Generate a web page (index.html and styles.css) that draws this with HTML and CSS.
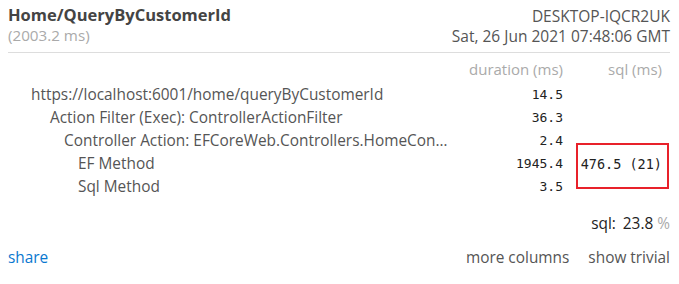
FILE: index.html
```html
<!DOCTYPE html>
<html>
<head>
<meta charset="utf-8">
<link rel="stylesheet" href="styles.css">
</head>
<body>
<div class="panel">
  <div class="head">
    <div class="head-left">
      <div class="title">Home/QueryByCustomerId</div>
      <div class="total">(2003.2 ms)</div>
    </div>
    <div class="head-right">
      <div class="machine">DESKTOP-IQCR2UK</div>
      <div class="date">Sat, 26 Jun 2021 07:48:06 GMT</div>
    </div>
  </div>
  <div class="timings">
    <div class="th"></div>
    <div class="th num">duration (ms)</div>
    <div class="th sqlcol">sql (ms)</div>

    <div class="label l0">https://localhost:6001/home/queryByCustomerId</div>
    <div class="num">14.5</div>
    <div class="sqlcol"></div>

    <div class="label l1">Action Filter (Exec): ControllerActionFilter</div>
    <div class="num">36.3</div>
    <div class="sqlcol"></div>

    <div class="label l2">Controller Action: EFCoreWeb.Controllers.HomeController.QueryByCustomerId</div>
    <div class="num">2.4</div>
    <div class="sqlcol"></div>

    <div class="label l3">EF Method</div>
    <div class="num">1945.4</div>
    <div class="sqlcol mark"><span class="sqlval">476.5 (21)</span></div>

    <div class="label l3">Sql Method</div>
    <div class="num">3.5</div>
    <div class="sqlcol"></div>
  </div>
  <div class="summary">sql: <span class="pct-val">23.8</span> <span class="pct">%</span></div>
  <div class="foot">
    <a class="share">share</a>
    <div class="links">
      <a class="link">more columns</a>
      <a class="link">show trivial</a>
    </div>
  </div>
</div>
</body>
</html>
```
FILE: styles.css
```css
html, body {
  margin: 0;
  padding: 0;
  background: #fff;
}
body {
  font-family: "Open Sans", "Noto Sans", sans-serif;
  color: #555;
  font-size: 15.4px;
}
.panel {
  width: 679px;
  box-sizing: border-box;
  padding: 0 9px 0 8px;
  height: 272px;
  box-shadow: 0 2px 6px rgba(0,0,0,0.18);
  background: #fff;
}
.head {
  display: flex;
  justify-content: space-between;
  border-bottom: 1px solid #ddd;
  height: 53px;
  box-sizing: border-box;
  padding-top: 5px;
}
.title {
  font-weight: 700;
  font-size: 16.5px;
  line-height: 20px;
  color: #444;
}
.total {
  color: #aaa;
  font-size: 15.2px;
  line-height: 21px;
}
.head-right {
  text-align: right;
  font-size: 15.5px;
  line-height: 20px;
  color: #555;
  padding-top: 1px;
}
.timings {
  display: grid;
  grid-template-columns: 442px 113px 107px;
  grid-template-rows: 25px;
  grid-auto-rows: 23px;
  line-height: 23px;
  padding-top: 5px;
}
.th {
  color: #aaa;
  font-size: 15px;
}
.label {
  white-space: nowrap;
  overflow: hidden;
  text-overflow: ellipsis;
  color: #555;
}
.l0 { padding-left: 23px; }
.l1 { padding-left: 42px; }
.l2 { padding-left: 56px; }
.l3 { padding-left: 70px; }
.num {
  text-align: right;
  font-family: "DejaVu Sans Mono", "Liberation Mono", monospace;
  font-size: 13px;
  color: #222;
}
.th.num {
  font-family: "Open Sans", "Noto Sans", sans-serif;
  font-size: 15px;
  color: #aaa;
}
.sqlcol {
  text-align: right;
  padding-right: 8px;
}
.th.sqlcol {
  color: #aaa;
}
.sqlval {
  font-family: "DejaVu Sans Mono", "Liberation Mono", monospace;
  font-size: 13.5px;
  color: #222;
}
.mark {
  position: relative;
}
.mark::after {
  content: "";
  position: absolute;
  left: 13px;
  right: 1px;
  top: -9px;
  height: 46px;
  box-sizing: border-box;
  border: 2px solid #e8212a;
}
.summary {
  text-align: right;
  margin-top: 16px;
  line-height: 20px;
  color: #222;
}
.pct-val { margin-left: 3px; }
.pct { color: #aaa; }
.foot {
  display: flex;
  justify-content: space-between;
  margin-top: 14px;
  line-height: 20px;
}
.share {
  color: #0a78d0;
}
.links {
  display: flex;
  gap: 19px;
}
.link {
  color: #555;
}
```
